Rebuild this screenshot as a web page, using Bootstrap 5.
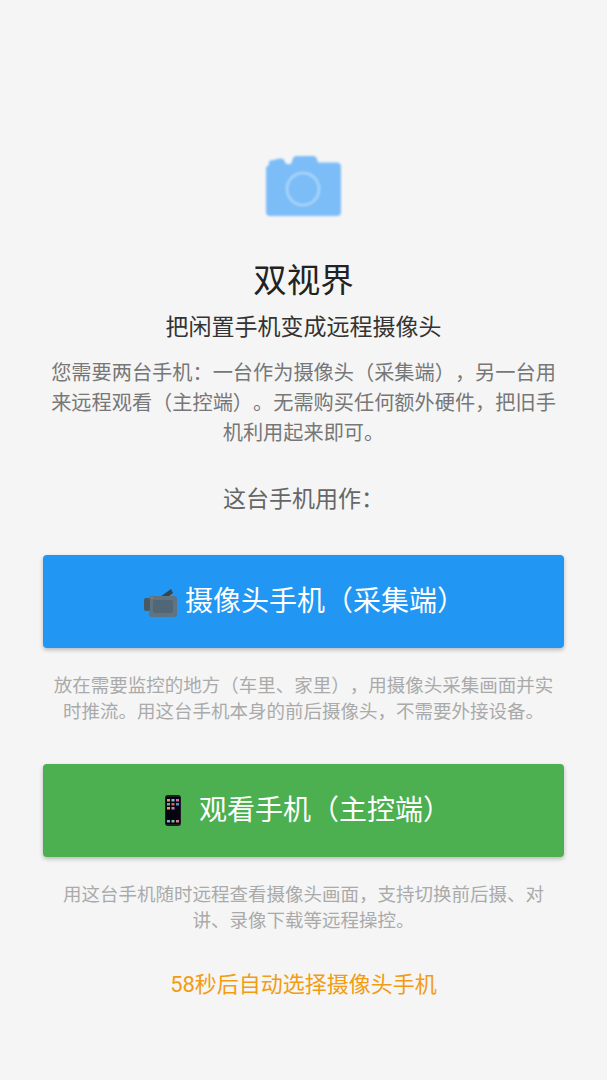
<!DOCTYPE html>
<html lang="zh-CN">
<head>
  <meta charset="UTF-8">
  <meta name="viewport" content="width=device-width, initial-scale=1.0">
  <title>双视界</title>
  <link href="https://cdn.jsdelivr.net/npm/bootstrap@5.3.3/dist/css/bootstrap.min.css" rel="stylesheet">
  <style>
    body {
      background: #f5f5f5;
      height: 1080px;
      overflow: hidden;
      font-family: Roboto, "Noto Sans CJK SC", sans-serif;
      font-kerning: none;
      text-spacing-trim: space-all;
      font-feature-settings: "palt" 0, "halt" 0, "chws" 0;
    }
    .page-wrap { padding: 156px 43px 0; }
    .cam-logo { width: 75px; height: 60px; filter: blur(.8px); display: block; }
    .app-title { font-size: 33.500px; line-height: 44px; color: #222; font-weight: 400; margin: 43px 0 0; }
    .app-sub { font-size: 23px; line-height: 30px; color: #333; margin: 10px 0 0; }
    .app-desc { font-size: 20.200px; line-height: 30px; color: #777; margin: 15px 0 0; }
    .pick-label { font-size: 23px; line-height: 30px; color: #666; margin: 37px 0 0; }
    .role-btn {
      height: 93px;
      font-size: 28px;
      color: #fff;
      border: 0;
      border-radius: 4px;
      box-shadow: 0 2px 4px rgba(0,0,0,.25);
      gap: 7px;
    }
    .role-blue, .role-blue:hover { background: #2196f3; color: #fff; margin-top: 40px; }
    .role-green, .role-green:hover { background: #4caf50; color: #fff; margin-top: 39px; }
    .role-note { font-size: 18.500px; line-height: 26px; color: #aaa; margin: 25px 10px 0; }
    .count-down { font-size: 22px; line-height: 30px; color: #f39c12; margin-top: 36px; }
  </style>
</head>
<body>
  <div class="page-wrap text-center">
    <div class="d-flex justify-content-center">
      <svg class="cam-logo" viewBox="0 0 75 60">
        <path fill="#7cbdf8" d="M3 5 14 2.500 Q18 2 19 6 L20 8 H25 L27 2 Q28 0 31 0 H47 Q50 0 51 3 L52 6.500 H71 Q75 6.500 75 11 V56 Q75 60 71 60 H4 Q0 60 0 56 V13 Q0 10 3 9Z"/>
        <circle cx="37" cy="33" r="16" fill="none" stroke="#add6f9" stroke-width="2.500"/>
      </svg>
    </div>
    <h1 class="app-title">双视界</h1>
    <p class="app-sub">把闲置手机变成远程摄像头</p>
    <p class="app-desc">您需要两台手机：一台作为摄像头（采集端），另一台用来远程观看（主控端）。无需购买任何额外硬件，把旧手机利用起来即可。</p>
    <p class="pick-label">这台手机用作：</p>
    <button type="button" class="btn role-btn role-blue w-100 d-flex align-items-center justify-content-center">
      <svg width="36" height="30" viewBox="0 0 36 30">
        <path fill="#37474f" d="M18 10 29 2 31 6 23 12Z"/>
        <rect x="7" y="9" width="28" height="21" rx="3" fill="#5f7480"/>
        <rect x="11" y="13" width="20" height="13" rx="2" fill="#526775"/>
        <rect x="2" y="11" width="6" height="13" rx="2" fill="#455a64"/>
        <circle cx="10" cy="11" r="1" fill="#c66"/>
      </svg>
      <span>摄像头手机（采集端）</span>
    </button>
    <p class="role-note">放在需要监控的地方（车里、家里），用摄像头采集画面并实时推流。用这台手机本身的前后摄像头，不需要外接设备。</p>
    <button type="button" class="btn role-btn role-green w-100 d-flex align-items-center justify-content-center">
      <svg width="36" height="31" viewBox="0 0 36 31">
        <rect x="9" y="0" width="16" height="31" rx="3" fill="#1c1c22"/>
        <rect x="10" y="2" width="14" height="27" fill="#05050f"/>
        <rect x="11" y="4" width="3" height="2.500" fill="#e0a080"/>
        <rect x="15.500" y="4" width="3" height="2.500" fill="#80c0d0"/>
        <rect x="20" y="4" width="3" height="2.500" fill="#d07090"/>
        <rect x="11" y="8" width="3" height="2.500" fill="#70b080"/>
        <rect x="15.500" y="8" width="3" height="2.500" fill="#e06050"/>
        <rect x="20" y="8" width="3" height="2.500" fill="#5090d0"/>
        <rect x="11" y="12" width="3" height="2.500" fill="#d0b060"/>
        <rect x="15.500" y="12" width="3" height="2.500" fill="#c080c0"/>
        <rect x="11" y="25" width="3" height="2.500" fill="#80b0d0"/>
        <rect x="15.500" y="25" width="3" height="2.500" fill="#80c090"/>
        <rect x="20" y="25" width="3" height="2.500" fill="#d08090"/>
      </svg>
      <span>观看手机（主控端）</span>
    </button>
    <p class="role-note">用这台手机随时远程查看摄像头画面，支持切换前后摄、对讲、录像下载等远程操控。</p>
    <div class="count-down">58秒后自动选择摄像头手机</div>
  </div>
</body>
</html>
